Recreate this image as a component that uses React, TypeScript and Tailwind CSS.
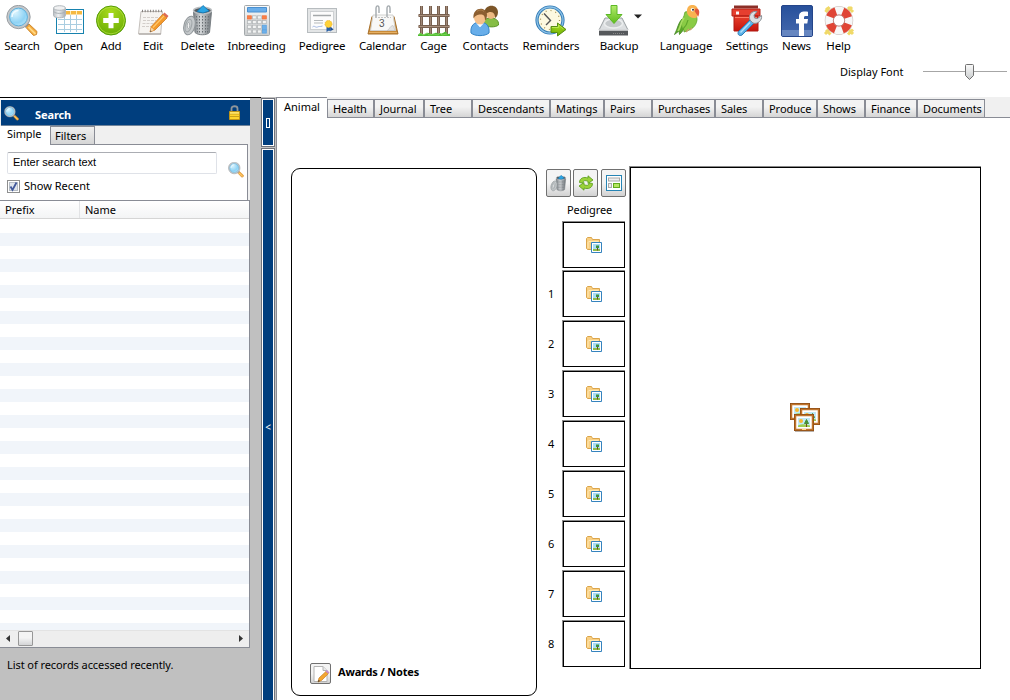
import React from "react";

type IconProps = { className?: string };
type SvgProps = IconProps & { children: React.ReactNode; box?: string };

const Svg = ({ children, className = "size-8", box = "0 0 32 32" }: SvgProps) => (
  <svg viewBox={box} className={`block shrink-0 ${className}`} fill="none">
    {children}
  </svg>
);

const Defs = () => (
  <svg className="absolute size-0" aria-hidden="true">
    <defs>
      <radialGradient id="glass" cx=".35" cy=".3" r=".8">
        <stop offset="0" stopColor="#d9f3fd" />
        <stop offset=".6" stopColor="#8fd3f5" />
        <stop offset="1" stopColor="#bfeafc" />
      </radialGradient>
      <radialGradient id="green" cx=".5" cy=".2" r=".9">
        <stop offset="0" stopColor="#a8da1c" />
        <stop offset="1" stopColor="#63a800" />
      </radialGradient>
      <linearGradient id="metal" x1="0" x2="1">
        <stop offset="0" stopColor="#777d82" />
        <stop offset=".4" stopColor="#d4d7d9" />
        <stop offset="1" stopColor="#6e7479" />
      </linearGradient>
      <linearGradient id="silver" x1="0" x2="1">
        <stop offset="0" stopColor="#b9bec3" />
        <stop offset=".4" stopColor="#eef0f1" />
        <stop offset="1" stopColor="#a4abb1" />
      </linearGradient>
      <linearGradient id="plate" x1="0" x2="0" y1="0" y2="1">
        <stop offset="0" stopColor="#fafafa" />
        <stop offset="1" stopColor="#c9cccd" />
      </linearGradient>
      <linearGradient id="red" x1="0" x2="0" y1="0" y2="1">
        <stop offset="0" stopColor="#e8402c" />
        <stop offset="1" stopColor="#c3150d" />
      </linearGradient>
      <linearGradient id="fb" x1="0" x2="0" y1="0" y2="1">
        <stop offset="0" stopColor="#27509b" />
        <stop offset="1" stopColor="#4468ad" />
      </linearGradient>
      <linearGradient id="leaf" x1="0" x2="0" y1="0" y2="1">
        <stop offset="0" stopColor="#b3ec6c" />
        <stop offset="1" stopColor="#5fbb1c" />
      </linearGradient>
    </defs>
  </svg>
);

const SearchIcon = ({ className }: IconProps) => (
  <Svg className={className}>
    <path d="M21 21l2-2 8 7.500-.5 3-3 1-7.500-8z" fill="#f4a93a" stroke="#cf8a30" />
    <path d="M22.500 22l7 7" stroke="#ffd782" strokeWidth="1.800" />
    <path d="M18.500 21.500l3.500-3.500" stroke="#8b9297" strokeWidth="3" />
    <circle cx="12.500" cy="12" r="10.300" fill="url(#glass)" stroke="#c3c7ca" strokeWidth="2.800" />
    <circle cx="12.500" cy="12" r="11.700" stroke="#8b9195" strokeWidth=".8" />
    <circle cx="12.500" cy="12" r="8.900" stroke="#5eb0dc" />
    <path d="M6 12c0-4 3-6.500 6.500-6.500" stroke="#f1fbff" strokeWidth="1.500" />
  </Svg>
);

const OpenIcon = () => (
  <Svg>
    <rect x="3.500" y="4.500" width="27" height="24" fill="#fff" stroke="#1782ae" />
    <path d="M5 6h24v3.500H5z" fill="#f5b942" />
    <path d="M17.500 6v3.500M23.500 6v3.500" stroke="#fff0b8" />
    <path d="M5 14.500h24M5 19.500h24M5 24.500h24M11.500 10v17M17.500 10v17M23.500 10v17" stroke="#a9cde0" />
    <path d="M.5 3v7.500c0 3 12 3 12 0V3" fill="url(#silver)" stroke="#b1b7bb" />
    <ellipse cx="6.500" cy="3" rx="6" ry="2.300" fill="#f0f1f2" stroke="#b1b7bb" />
    <path d="M.8 6.500c1 2.500 10.400 2.500 11.400 0" stroke="#a8aeb2" />
  </Svg>
);

const AddIcon = () => (
  <Svg>
    <circle cx="16" cy="15.500" r="14.500" fill="url(#green)" stroke="#569c05" />
    <circle cx="16" cy="15.500" r="13.300" stroke="#b9e247" strokeWidth=".7" />
    <path d="M13.500 8h5v5h5.300v5h-5.300v5.300h-5V18H8.200v-5h5.300z" fill="#fff" />
  </Svg>
);

const EditIcon = () => (
  <Svg>
    <path d="M4 6.500h21.500l-1.800 22.500H1.500z" fill="#f6f4f1" stroke="#c4bfbb" />
    <path d="M2 29h22" stroke="#a19c98" />
    <path d="M5 6h20.500" stroke="#84807d" strokeWidth="2.500" strokeDasharray="1 1.700" />
    <path d="M6 12.500h15M6 15.500h13M5.500 18.500h12M5 21.500h9" stroke="#d3ceca" strokeDasharray="3 1" />
    <path d="M26 9l4 4-12 12-5 2 1.300-5.500z" fill="#f39a2b" stroke="#cf7a26" strokeWidth=".8" />
    <path d="M27 10.800L16 22.500" stroke="#ffc86d" strokeWidth="1.200" />
    <path d="M26 9l1.500-1.500 4 3.500-1.500 2z" fill="#dd6a55" />
    <path d="M14.500 22.500l2.500 2.500-4 2z" fill="#f5d7aa" />
    <path d="M13.400 25.300l1.200 1-1.600.7z" fill="#444" />
  </Svg>
);

const DeleteIcon = ({ className }: IconProps) => (
  <Svg className={className}>
    <path d="M11.500 7l1.500 20.500c3 3 12 3 14.500 0L29.500 7z" fill="url(#metal)" stroke="#7a8084" />
    <path d="M14.500 11l1 17M17.500 11v18M20.500 11v18M23.500 11v18M26.500 11l-1 17" stroke="#676d71" strokeDasharray="1.500 1.500" />
    <ellipse cx="20.500" cy="5.500" rx="9" ry="3.200" fill="#555b5f" stroke="#babec1" strokeWidth="1.500" />
    <path d="M15 6.500l6-6 6 5.500-6 2z" fill="#2aa5e4" stroke="#1475b0" strokeWidth=".8" />
    <ellipse cx="7.500" cy="20.500" rx="5.500" ry="9.500" fill="#c5c9cb" stroke="#8d9397" transform="rotate(15 7.500 20.500)" />
    <ellipse cx="6.500" cy="20.500" rx="3" ry="6.500" stroke="#a2a8ab" strokeWidth="1.200" transform="rotate(15 6.500 20.500)" />
    <ellipse cx="6.500" cy="20.500" rx="1.200" ry="3" fill="#f0f1f1" stroke="#8d9397" strokeWidth=".6" />
  </Svg>
);

const CalculatorIcon = () => (
  <Svg>
    <rect x="3.500" y=".5" width="25" height="30" rx="1" fill="url(#plate)" stroke="#a3a8ab" />
    <path d="M6.500 2.500h19v4.500h-19z" fill="#6aaeea" stroke="#4a90d0" />
    {[0, 1, 2, 3].map((r) =>
      [0, 1, 2, 3].map((c) => {
        const orange = r === 0 && (c === 0 || c === 3);
        const blue = c === 3 && r > 1;
        return (
          <rect
            key={`${r}-${c}`}
            x={6.5 + c * 5}
            y={10.8 + r * 4.7}
            width="3.800"
            height={blue && r === 2 ? 5 : 3.2}
            fill={orange ? "#f98148" : blue ? "#6db0ea" : "#f3f4f4"}
            stroke={orange ? "#f2703a" : blue ? "#5aa2e0" : "#b3b7b9"}
            strokeWidth=".8"
          />
        );
      })
    )}
  </Svg>
);

const CertificateIcon = () => (
  <Svg>
    <rect x="1.500" y="3.500" width="29" height="24" fill="#e3e5e6" stroke="#b7bcbf" />
    <rect x="4.500" y="6.500" width="23" height="18" fill="#fcfcfc" stroke="#cdd0d2" />
    <path d="M7 10.500h18" stroke="#a4a8aa" strokeWidth="1.500" />
    <path d="M8 15.500h9M8 18h9" stroke="#b5b9bb" />
    <path d="M6.500 22c2-2 3 1 5 0s2 0 5-1" stroke="#9fb6e3" />
    <path d="M20.500 20v7l2.500-1.500 1.500 1V20z" fill="#285fa5" />
    <path d="M24 21l3.500 3.500-3 1.500z" fill="#1d4d92" />
    <circle cx="22.500" cy="19" r="3.500" fill="#ffd238" stroke="#efb93a" strokeDasharray="1.500 .8" />
  </Svg>
);

const CalendarIcon = () => (
  <Svg>
    <path d="M5 11.500h22l4 17.500H1z" fill="#c98b38" stroke="#a8712c" />
    <path d="M6 10h20l2.500 15.500H3.500z" fill="#f8f8f7" stroke="#d2d2d0" />
    <path d="M8 12.500h16" stroke="#c4c4c4" strokeDasharray="2 1" />
    <path d="M9 12V3.500c0-3.500 3-3.500 3 0V8M20 12V3.500c0-3.500 3-3.500 3 0V8" stroke="#a4aaae" strokeWidth="1.400" />
    <path d="M2 27.500h28" stroke="#e6b064" />
    <text x="12" y="21.500" fontSize="10" fill="#555" fontFamily="Liberation Sans, sans-serif">3</text>
    <path d="M20 25.500c3-1 2-4 6-5l2 5z" fill="#e4e4e4" stroke="#bbb" strokeWidth=".6" />
  </Svg>
);

const CageIcon = () => (
  <Svg>
    <path d="M3.500 1v29M12.500 1v29M20.500 1v29M28.500 1v29" stroke="#78604f" strokeWidth="3" />
    <path d="M3.500 1v28M12.500 1v28M20.500 1v28M28.500 1v28" stroke="#a18877" />
    <path d="M.5 10.500h31M.5 21.500h31" stroke="#78604f" strokeWidth="3" />
    <path d="M.5 10.500h31M.5 21.500h31" stroke="#a98f7c" />
    <path d="M0 30c1-2 3-2 4-1s4 0 5-1 3 1 5 1 3-2 5-1 4 1 6 0 3-2 4 0 3 0 3 1v2H0z" fill="#51ba34" />
    <path d="M1 29.500l2-1 2 1.500 4-2 2 2 5-1 4 1 2-2 2 2 5-1" stroke="#7ddb58" strokeWidth=".8" />
  </Svg>
);

const ContactsIcon = () => (
  <Svg>
    <path d="M13 20c0-6 4-7 8-7s8 2 7.500 7c-3 2.500-10 2.500-15.500 0z" fill="#86bd45" stroke="#5b9428" />
    <ellipse cx="21" cy="8" rx="5" ry="6" fill="#edb981" />
    <path d="M14.500 9C13.500-1 27.500-2 28 7c0 3-1.500 5.500-3 6 0-5-2-6-5.500-6z" fill="#7c5528" />
    <path d="M1 28c-1-8 4-11 9-11s10 3 9 11c-4 3.500-14 3.500-18 0z" fill="#68aeea" stroke="#3484c6" />
    <path d="M7 18.500l3 3.500 3-3.500" fill="#fff" stroke="#e2f1fc" />
    <ellipse cx="10" cy="12.500" rx="6" ry="7" fill="#f4c08c" />
    <path d="M3.500 13.500C2 1 17.500 1 17 10c0 3-1 5-2 5.500 0-4-1-6-4-6-4 0-5.500 1-7.500 4z" fill="#8b5e30" />
    <path d="M7 6.500c2-2 5-2 7 0" stroke="#b0834f" />
  </Svg>
);

const ClockIcon = () => (
  <Svg>
    <circle cx="15" cy="15" r="13" fill="#fdf9e0" stroke="#2f79b4" strokeWidth="3.200" />
    <circle cx="15" cy="15" r="13" stroke="#8cc2e8" strokeWidth="1.300" />
    <circle cx="15" cy="15" r="9.500" stroke="#a89559" strokeWidth="1.200" strokeDasharray="1 4" />
    <path d="M9 8.500l6.500 7-4.500 4.500" stroke="#555" strokeWidth="1.400" />
    <path d="M16 21.500h6.500V18l8.500 6.500-8.500 6.500v-3.500H16z" fill="url(#green)" stroke="#568d12" />
    <path d="M17 22.500h6.500V20l5 4" stroke="#b9e64e" />
  </Svg>
);

const BackupIcon = () => (
  <Svg>
    <path d="M7 13h17l6 12H1z" fill="#dcdfe1" stroke="#9a9fa2" />
    <ellipse cx="15.500" cy="18.500" rx="9" ry="4.500" fill="#c6cacc" stroke="#eceeef" strokeWidth="1.500" />
    <path d="M1 25h29v5.500H1z" fill="#56595c" />
    <path d="M1 25h29" stroke="#dfe1e2" strokeWidth="1.500" />
    <path d="M15 28.500h12" stroke="#888" strokeDasharray="1 1" />
    <path d="M13 .5h6v9h5l-8 9-8-9h5z" fill="url(#leaf)" stroke="#5cb826" />
  </Svg>
);

const ParrotIcon = () => (
  <Svg>
    <path d="M12 14C8 18 8 23 4.500 29.500l4.500-3.500.5 3.500 7-8z" fill="#5aa52b" stroke="#43851f" strokeWidth=".8" />
    <path d="M15 7c7-2 12.500 2 12 8-1 7-6 10-13 12 1-3-2.500-3-2.500-7 0-6 2.500-7 3.500-13z" fill="#8acb45" stroke="#5ea329" strokeWidth=".8" />
    <path d="M17 8c-1-8 5-9 8-7.500 4 2 4 8 1.500 12-3 1.500-8 0-9.500-4.500z" fill="#f9b350" />
    <path d="M25.500 3.500c4.500-.5 4.500 5 2.500 8.500-1-3-2.500-4-3.500-6z" fill="#e25a3c" />
    <circle cx="22.500" cy="4.800" r="1.800" fill="#fff" />
    <circle cx="23" cy="4.800" r="1" fill="#333" />
    <path d="M14 13c-4 5-3 9-6 13" stroke="#a8dc62" strokeWidth="1.800" />
    <path d="M18 15c-1 5-3 7-5 9" stroke="#5ea52b" strokeWidth="1.200" />
    <path d="M16 27l3-3M20 25l2-2" stroke="#c9a06a" strokeWidth="1.200" />
  </Svg>
);

const SettingsIcon = () => (
  <Svg>
    <path d="M3 .5h24v3H3z" fill="#8c2f28" />
    <path d="M1 4h28v7H1z" fill="#e63f2f" stroke="#b3261c" />
    <path d="M3 11h24v15H3z" fill="url(#red)" stroke="#b01a12" />
    <path d="M4 12.500h22" stroke="#ff7b65" />
    <path d="M5 6.500h3v3H5z" fill="#f7f7f7" />
    <path d="M19 15l3.500 3.500L11 30c-2.500 1.500-5-.5-3.500-3.500z" fill="#5cb2e8" stroke="#2b7bb6" />
    <path d="M19 17.500l-9.500 10" stroke="#b4e0fa" strokeWidth="1.500" />
    <path d="M19 15c-2-5 2-9.500 7-8.500l-3 3.500.5 3 3 .5 4-3c1 5-4 9-8.500 7.500z" fill="#dde0e2" stroke="#889096" />
  </Svg>
);

const FacebookIcon = () => (
  <Svg>
    <rect x=".5" y=".5" width="31" height="31" rx="1.500" fill="url(#fb)" stroke="#24458a" />
    <path d="M1 25h30v6H1z" fill="#6686c0" />
    <path d="M18 31V18.500h-3v-4.500h3v-2.500c0-4.500 3.500-5.500 9-4.700v4.200c-3 0-4-.2-4 1.800V14h4l-.7 4.500H23V31z" fill="#fff" />
  </Svg>
);

const HelpIcon = () => (
  <Svg>
    <path d="M2.500 7l4-5M7 7L3 3M25 2l5 5M29 2l-5 5M3 25l4.500 4.500M2 29l5-5M25 29.500l5-5M30 29l-5-5" stroke="#f0d968" strokeWidth="3" />
    <circle cx="16" cy="15.500" r="9.700" stroke="#c5b6b2" strokeWidth="9" />
    <circle cx="16" cy="15.500" r="9.700" stroke="#f7f7f7" strokeWidth="8" />
    <circle cx="16" cy="15.500" r="9.700" stroke="#e04535" strokeWidth="8" strokeDasharray="8.237 7" strokeDashoffset="-3.500" />
    <circle cx="16" cy="15.500" r="5.700" stroke="#b9675f" strokeWidth=".7" />
  </Svg>
);

const FolderPicture = () => (
  <Svg className="w-[17px] h-[18px]" box="0 0 17 18">
    <path d="M.5 2.500l1-1h4l1 2h7v10H1.500l-1-1z" fill="#f9d084" stroke="#dba54c" />
    <path d="M2.500 5.500h10M2 12V6" stroke="#ffe9b4" />
    <path d="M5.500 6.500h10v10h-10z" fill="#fff" stroke="#3583be" />
    <path d="M7 8h7v5H7z" fill="#a8dcf3" />
    <path d="M7 13h7v2H7z" fill="#8fbd4c" />
    <path d="M10 9.500h3v2.500h-3z" fill="#3d8f3c" />
    <path d="M11.500 12v2.500" stroke="#764b22" />
  </Svg>
);

const FrameArt = () => (
  <>
    <rect x=".5" y=".5" width="19" height="16" fill="#fff" stroke="#8d4c15" />
    <rect x="1.500" y="1.500" width="17" height="14" stroke="#c0752c" strokeWidth="1.500" />
    <rect x="3.500" y="3.500" width="13" height="10" fill="#bfe9f8" stroke="#fff" />
    <path d="M4 11.500c4-2 8-1 12 0V13H4z" fill="#a1cf50" />
    <circle cx="7" cy="7" r="2" fill="#f9b82f" />
    <path d="M12.500 5.500l2 4h-4z" fill="#478f35" stroke="#478f35" />
    <path d="M12.500 10v3" stroke="#74491e" />
  </>
);

const PicturesIcon = () => (
  <Svg className="w-[32px] h-[31px]" box="0 0 32 31">
    <g transform="translate(0 1)"><FrameArt /></g>
    <g transform="translate(10 6)"><FrameArt /></g>
    <g transform="translate(4 12)"><FrameArt /></g>
    <path d="M5 29.500h19" stroke="#b8b0aa" />
    <path d="M12 27.500h4" stroke="#ffd98a" />
  </Svg>
);

const RefreshIcon = () => (
  <Svg className="size-4" box="0 0 16 16">
    <path d="M1.500 7.500C1.500 3 6 1.500 10 3V.8L15 5l-5 3.500V6.300C7 5 5.500 5.500 4.500 8z" fill="#9bd23a" stroke="#559b17" strokeWidth=".8" />
    <path d="M14.500 8.500c0 4.500-4.500 6-8.500 4.500v2.200L1 11l5-3.500v2.200c3 1.300 4.500.8 5.500-1.700z" fill="#9bd23a" stroke="#559b17" strokeWidth=".8" />
  </Svg>
);

const LayoutIcon = () => (
  <Svg className="size-4" box="0 0 16 16">
    <rect x=".5" y=".5" width="15" height="15" fill="#fff" stroke="#2684b4" />
    <rect x="2.500" y="3" width="11" height="3" fill="#eee" stroke="#aaa" />
    <rect x="2.500" y="8.500" width="3" height="4" fill="#eee" stroke="#aaa" />
    <rect x="7.500" y="8.500" width="6" height="4" fill="#b5e55e" stroke="#60aa1a" />
  </Svg>
);

const NoteIcon = () => (
  <Svg className="size-[18px]" box="0 0 18 18">
    <path d="M2 1.500h9l4 4v11H2z" fill="#fff" stroke="#b4b4b4" />
    <path d="M11 1.500v4h4" fill="#e9e9e9" stroke="#b4b4b4" />
    <path d="M14 6.500l2.300 2.300-6.800 6.700-3.500 1.500 1-4z" fill="#f4a52f" stroke="#cc862e" strokeWidth=".8" />
    <path d="M13.500 6.500l1.500-1.500 2.500 2.500-1.200 1.300z" fill="#c98bc9" />
    <path d="M6 17l.5-2 1.500 1z" fill="#333" />
  </Svg>
);

const LockIcon = () => (
  <Svg className="w-[11px] h-[15px]" box="0 0 11 15">
    <path d="M2.500 7V3.500c0-3 6-3 6 0V7" stroke="#8e959b" strokeWidth="1.800" />
    <path d="M.5 6.500h10v8H.5z" fill="#ffd52d" stroke="#bf9518" />
    <path d="M1 9h9M1 11.500h9" stroke="#c9a01c" />
    <path d="M1 8h9" stroke="#fff19a" />
  </Svg>
);

type Tool = { label: string; cell: string; Icon: React.FC<IconProps>; menu?: boolean };

const tools: Tool[] = [
  { label: "Search", cell: "w-[44px]", Icon: SearchIcon },
  { label: "Open", cell: "w-[49px]", Icon: OpenIcon },
  { label: "Add", cell: "w-[36px]", Icon: AddIcon },
  { label: "Edit", cell: "w-[48px]", Icon: EditIcon },
  { label: "Delete", cell: "w-[41px]", Icon: DeleteIcon },
  { label: "Inbreeding", cell: "w-[77px]", Icon: CalculatorIcon },
  { label: "Pedigree", cell: "w-[54px]", Icon: CertificateIcon },
  { label: "Calendar", cell: "w-[67px]", Icon: CalendarIcon },
  { label: "Cage", cell: "w-[35px]", Icon: CageIcon },
  { label: "Contacts", cell: "w-[69px]", Icon: ContactsIcon },
  { label: "Reminders", cell: "w-[62px]", Icon: ClockIcon },
  { label: "Backup", cell: "w-[74px]", Icon: BackupIcon, menu: true },
  { label: "Language", cell: "w-[60px]", Icon: ParrotIcon },
  { label: "Settings", cell: "w-[62px]", Icon: SettingsIcon },
  { label: "News", cell: "w-[37px]", Icon: FacebookIcon },
  { label: "Help", cell: "w-[47px]", Icon: HelpIcon },
];

const tabs = [
  { label: "Health", size: "w-[47px]" },
  { label: "Journal", size: "w-[50px]" },
  { label: "Tree", size: "w-[48px]" },
  { label: "Descendants", size: "w-[78px]" },
  { label: "Matings", size: "w-[54px]" },
  { label: "Pairs", size: "w-[48px]" },
  { label: "Purchases", size: "w-[63px]" },
  { label: "Sales", size: "w-[48px]" },
  { label: "Produce", size: "w-[54px]" },
  { label: "Shows", size: "w-[48px]" },
  { label: "Finance", size: "w-[52px]" },
  { label: "Documents", size: "w-[68px]" },
];

const SmallButton = ({ children, className }: { children: React.ReactNode; className: string }) => (
  <button
    className={`flex shrink-0 items-center justify-center rounded-[2px] border border-[#707070] bg-linear-to-b from-[#f4f4f4] from-50% to-[#d2d2d2] ${className}`}
  >
    {children}
  </button>
);

function Toolbar() {
  return (
    <header className="h-[97px] shrink-0">
      <div className="flex h-[56px] pt-[5px]">
        {tools.map(({ label, cell, Icon, menu }) => (
          <button key={label} className={`flex shrink-0 flex-col items-center ${cell}`}>
            {menu ? (
              <span className="flex w-[42px] gap-[4px]">
                <Icon />
                <svg viewBox="0 0 8 5" className="mt-[9px] h-[5px] w-[8px] shrink-0">
                  <path d="M0 .5h8L4 4.500z" fill="#222" />
                </svg>
              </span>
            ) : (
              <Icon />
            )}
            <span className="mt-px text-[11.5px] leading-4 tracking-[-0.17px] whitespace-nowrap">{label}</span>
          </button>
        ))}
      </div>
      <div className="flex h-[32px] items-center pl-[840px]">
        <span className="w-[83px] whitespace-nowrap">Display Font</span>
        <svg viewBox="0 0 84 16" className="h-[16px] w-[84px]">
          <path d="M0 7.500h84" stroke="#a6a6a6" />
          <path d="M43.500.5h6q1 0 1 1v10l-4 4-4-4v-10q0-1 1-1z" fill="url(#plate)" stroke="#707070" />
        </svg>
      </div>
    </header>
  );
}

function Sidebar() {
  return (
    <aside className="flex w-[261px] shrink-0 flex-col border-t border-black bg-[#c0c0c0]">
      <section className="flex h-[550px] w-[250px] flex-col border-t-2 border-white bg-[#f0f0f0]">
        <div className="ml-px flex h-[26px] shrink-0 items-center border-b border-[#70849b] bg-[#003e7e] pr-[10px] pl-[3px]">
          <SearchIcon className="mt-[2px] size-[15px]" />
          <h2 className="ml-[16px] pt-[6px] font-bold tracking-[-0.1px] text-white">Search</h2>
          <span className="mb-px ml-auto">
            <LockIcon />
          </span>
        </div>
        <div className="flex h-[19px] shrink-0">
          <div className="w-[50px] bg-white pl-[7px] leading-[16px] tracking-[-0.1px]">Simple</div>
          <div className="w-[45px] border-x border-t border-[#898c95] bg-linear-to-b from-[#f0f0f0] to-[#d4d4d4] pl-[4px] leading-[18px]">
            Filters
          </div>
        </div>
        <div className="-mt-px h-[56px] w-[248px] shrink-0 border-r border-[#898c95] bg-white">
          <div className="ml-[50px] h-px bg-[#898c95]" />
          <div className="flex">
            <div className="pl-[7px]">
              <input
                readOnly
                value="Enter search text"
                className="mt-[7px] block h-[22px] w-[210px] rounded-[2px] border border-[#dfe2e8] border-t-[#abadb3] px-[5px] pb-[2px] font-['Liberation_Sans',sans-serif] text-[11px] outline-none"
              />
              <label className="mt-[4px] flex h-[16px] items-center">
                <svg viewBox="0 0 13 13" className="mr-[4px] size-[13px]">
                  <rect x=".5" y=".5" width="12" height="12" fill="#fff" stroke="#8e8f8f" />
                  <rect x="2.500" y="2.500" width="8" height="8" fill="#dfe5ec" stroke="#b6bdc6" />
                  <path d="M3.500 6.500l2 3.500 4-7.500" fill="none" stroke="#41589b" strokeWidth="1.800" />
                </svg>
                Show Recent
              </label>
            </div>
            <div className="mt-[17px] ml-[11px]">
              <SearchIcon className="size-4" />
            </div>
          </div>
        </div>
        <div className="flex min-h-0 grow flex-col border-t border-r border-b border-[#898c95] bg-white">
          <div className="flex h-[18px] shrink-0 border-b border-[#d5d5d5] bg-linear-to-b from-white to-[#f3f4f5] leading-[18px]">
            <div className="w-[80px] border-r border-[#e2e3e5] pl-[5px]">Prefix</div>
            <div className="pl-[5px]">Name</div>
          </div>
          <div className="mt-px min-h-0 grow overflow-hidden">
            {Array.from({ length: 32 }, (_, i) => (
              <div key={i} className="h-[13px] odd:bg-white even:bg-[#f1f5fa]" />
            ))}
          </div>
          <div className="flex h-[17px] shrink-0 items-center border-t border-[#e3e3e3] bg-[#eeeeee] pb-px pl-[6px]">
            <svg viewBox="0 0 4 7" className="h-[7px] w-[4px]">
              <path d="M4 0v7L0 3.500z" fill="#333" />
            </svg>
            <div className="ml-[8px] h-[15px] w-[15px] rounded-[1px] border border-[#979797] bg-linear-to-b from-[#f4f4f4] from-45% to-[#d3d4d6]" />
            <svg viewBox="0 0 4 7" className="mr-[6px] ml-auto h-[7px] w-[4px]">
              <path d="M0 0v7l4-3.500z" fill="#333" />
            </svg>
          </div>
        </div>
      </section>
      <p className="mt-[9px] pl-[7px] leading-4 tracking-[-0.07px]">List of records accessed recently.</p>
    </aside>
  );
}

function Splitter() {
  return (
    <div className="flex w-[15px] shrink-0 flex-col gap-px bg-[#c0c0c0] pt-px pr-px text-white">
      <div className="flex h-[49px] shrink-0 border border-[#70737c] bg-white p-px">
        <div className="flex grow items-center justify-center bg-[#003e7e]">
          <span className="h-[10px] w-[4px] border border-white" />
        </div>
      </div>
      <div className="flex grow justify-center border border-b-0 border-[#70737c] bg-white px-px pt-px">
        <span className="grow bg-[#003e7e] pt-[269px] text-center text-[10px] leading-[16px]">&lt;</span>
      </div>
    </div>
  );
}

const Thumb = ({ label, gap }: { label: string; gap: string }) => (
  <div className={`flex h-[47px] items-center ${gap}`}>
    <span className="w-[16px] pt-[2px] pl-[2px]">{label}</span>
    <div className="h-[47px] w-[63px] border-t border-l border-[#888]">
      <div className="flex h-full items-center justify-center border border-black">
        <FolderPicture />
      </div>
    </div>
  </div>
);

function Workspace() {
  return (
    <main className="flex min-w-0 grow flex-col border-l border-[#898c95]">
      <nav className="flex h-[21px] shrink-0 bg-[#f0f0f0]">
        <div className="w-[50px] border-t border-[#898c95] bg-white pl-[7px] leading-[18px]">Animal</div>
        <div className="flex grow border-b border-[#898c95] pt-[2px]">
          {tabs.map(({ label, size }) => (
            <div
              key={label}
              className={`shrink-0 border-t border-r border-l border-[#898c95] bg-linear-to-b from-[#f3f3f3] from-40% to-[#d5d5d5] pl-[5px] leading-[18px] tracking-[-0.05px] whitespace-nowrap ${size}`}
            >
              {label}
            </div>
          ))}
        </div>
      </nav>
      <div className="flex min-h-0 grow">
        <section className="mt-[50px] ml-[14px] flex h-[528px] w-[246px] shrink-0 items-end rounded-[9px] border border-black pb-[11px] pl-[18px]">
          <SmallButton className="size-[21px]">
            <NoteIcon />
          </SmallButton>
          <b className="ml-[7px] pb-[3px] leading-[18px] tracking-[-0.2px]">Awards / Notes</b>
        </section>
        <section className="mt-[51px] ml-[9px] w-[80px] shrink-0">
          <div className="flex gap-[2px]">
            <SmallButton className="h-[28px] w-[25px]"><DeleteIcon className="size-[17px]" /></SmallButton>
            <SmallButton className="h-[28px] w-[25px]"><RefreshIcon /></SmallButton>
            <SmallButton className="ml-px h-[28px] w-[25px]"><LayoutIcon /></SmallButton>
          </div>
          <div className="mt-[5px] h-[19px] pl-[21px] leading-[16px] tracking-[-0.1px]">Pedigree</div>
          <Thumb label="" gap="" />
          {["1", "2", "3", "4", "5", "6", "7", "8"].map((n) => (
            <Thumb key={n} label={n} gap={n === "1" ? "mt-[2px]" : "mt-[3px]"} />
          ))}
        </section>
        <section className="mt-[48px] ml-[3px] h-[503px] w-[352px] shrink-0 border-t border-l border-[#888]">
          <div className="flex h-full items-center justify-center border border-black pb-[2px]">
            <PicturesIcon />
          </div>
        </section>
      </div>
    </main>
  );
}

export default function App() {
  return (
    <div className="flex h-[700px] w-[1010px] flex-col overflow-hidden bg-white font-['Noto_Sans',sans-serif] text-[11px] text-black">
      <Defs />
      <Toolbar />
      <div className="flex min-h-0 grow">
        <Sidebar />
        <Splitter />
        <Workspace />
      </div>
    </div>
  );
}
